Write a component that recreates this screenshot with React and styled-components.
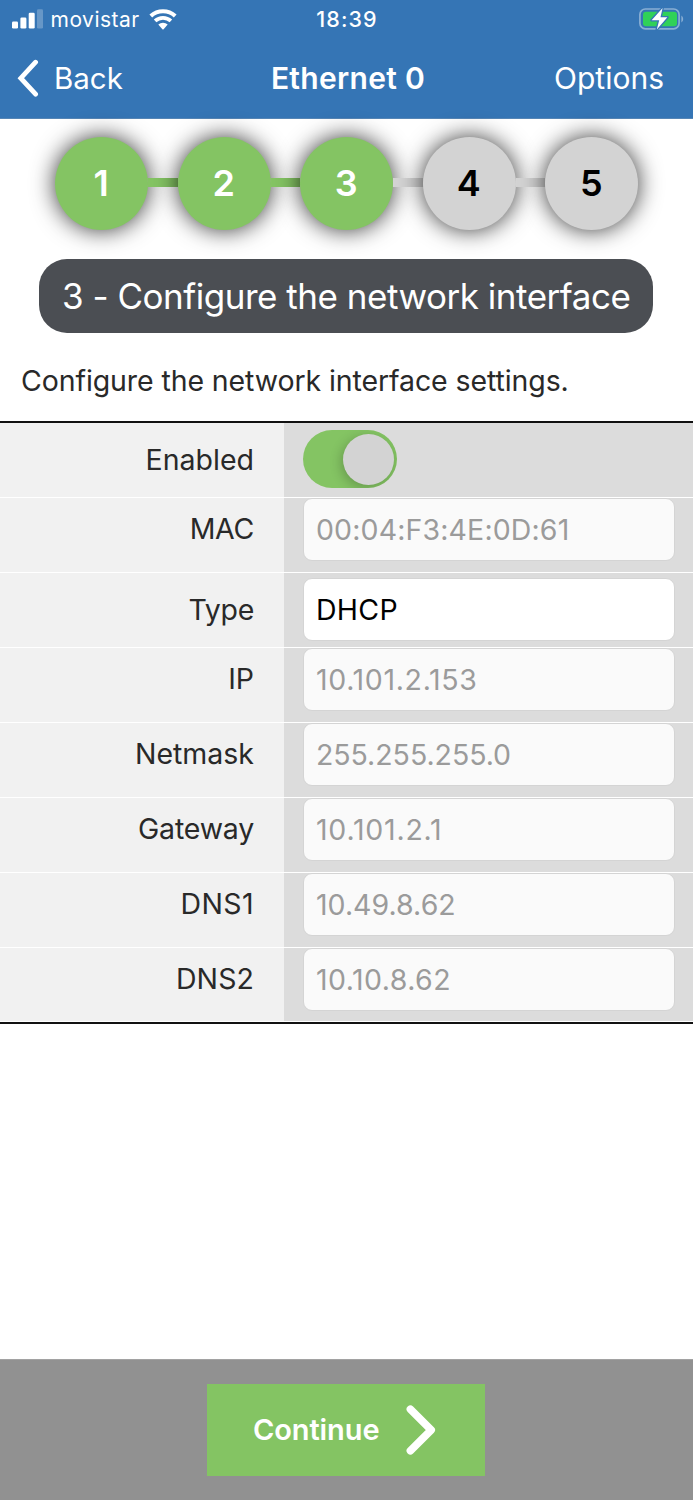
import React from 'react';
import styled, { createGlobalStyle } from 'styled-components';

const GlobalStyle = createGlobalStyle`
  * {
    box-sizing: border-box;
  }
  body {
    margin: 0;
    background: #fff;
    font-family: Inter, "Liberation Sans", sans-serif;
  }
`;

const Page = styled.div`
  display: flex;
  flex-direction: column;
  width: 693px;
  height: 1500px;
  overflow: hidden;
`;

const Header = styled.header`
  height: 119px;
  background: #3575b5;
  border-bottom: 1px solid #5686b6;
  color: #fff;
`;

const StatusBar = styled.div`
  display: grid;
  grid-template-columns: 1fr auto 1fr;
  align-items: center;
  height: 38px;
  padding: 0 9px 0 12px;
`;

const Carrier = styled.div`
  display: flex;
  align-items: center;
  font-size: 21px;
  letter-spacing: 0.5px;

  span {
    margin: 0 9px 0 7.5px;
  }
`;

const Time = styled.div`
  padding-right: 2px;
  font-size: 21.5px;
  font-weight: 500;
  letter-spacing: 1.1px;
`;

const Battery = styled.svg`
  justify-self: end;
`;

const NavBar = styled.nav`
  display: grid;
  grid-template-columns: 1fr auto 1fr;
  align-items: center;
  height: 80px;
  padding: 0 29px 0 17px;
  font-size: 30px;
`;

const BackLink = styled.div`
  display: flex;
  align-items: center;
  gap: 14px;
  font-size: 29.5px;
`;

const Title = styled.h1`
  margin: 0;
  padding-left: 15px;
  font-size: 30px;
  font-weight: 600;
  letter-spacing: 0.3px;
`;

const OptionsLink = styled.div`
  text-align: right;
`;

const Steps = styled.div`
  display: flex;
  align-items: center;
  margin: 18px 0 0 55px;
`;

const Circle = styled.div`
  flex: none;
  width: 93px;
  height: 93px;
  padding-right: 1px;
  border-radius: 50%;
  background: ${({ $done }) => ($done ? '#84c463' : '#d3d3d3')};
  color: ${({ $done }) => ($done ? '#fff' : '#000')};
  box-shadow: 0 0 23px rgba(0, 0, 0, 0.8);
  font-size: 36px;
  font-weight: 600;
  line-height: 93px;
  text-align: center;
`;

const Connector = styled.div`
  flex: none;
  width: 29.6px;
  height: 9px;
  margin-bottom: 2px;
  background: ${({ $done }) => ($done ? '#84c463' : '#d3d3d3')};
`;

const StepTitle = styled.h2`
  width: 614px;
  height: 74px;
  margin: 29px 0 0 39px;
  padding-left: 23px;
  border-radius: 28px;
  background: #4b4e53;
  color: #fff;
  font-size: 35px;
  font-weight: 400;
  letter-spacing: -0.48px;
  line-height: 74px;
  white-space: nowrap;
`;

const Description = styled.p`
  height: 88px;
  margin: 0;
  padding-left: 21px;
  color: #292929;
  font-size: 28.5px;
  letter-spacing: -0.1px;
  line-height: 95px;
  white-space: nowrap;
`;

const Form = styled.div`
  border-top: 2px solid #111;
  border-bottom: 2px solid #111;
`;

const Row = styled.div`
  display: grid;
  grid-template-columns: 284px 1fr;
  height: 75px;
  border-bottom: 1px solid #fff;

  &:last-child {
    height: 74px;
  }
`;

const Label = styled.div`
  padding-right: 30px;
  background: #f1f1f1;
  color: #292929;
  font-size: 28.5px;
  letter-spacing: ${({ $tracking }) => $tracking || 0}px;
  line-height: ${({ $centered }) => ($centered ? 73 : 61)}px;
  text-align: right;
`;

const Cell = styled.div`
  padding: ${({ $top }) => $top || 0}px 18px 0 19px;
  background: #dcdcdc;
`;

const Field = styled.input`
  display: block;
  width: 100%;
  height: 63px;
  padding: 0 12px;
  border: 1px solid #d4d4d4;
  border-radius: 9px;
  background: ${({ $editable }) => ($editable ? '#fff' : '#fafafa')};
  color: ${({ $editable }) => ($editable ? '#000' : '#9b9b9b')};
  font-family: inherit;
  font-size: 28.5px;
  letter-spacing: ${({ $tracking }) => $tracking || 0}px;
  outline: none;
`;

const Switch = styled.div`
  display: flex;
  align-items: center;
  justify-content: flex-end;
  width: 94px;
  height: 58px;
  padding-right: 3px;
  border-radius: 29px;
  background: #84c463;
  overflow: hidden;
`;

const Knob = styled.div`
  width: 51px;
  height: 51px;
  border-radius: 50%;
  background: #d3d3d3;
  box-shadow: -2px 3px 12px rgba(0, 0, 0, 0.22);
`;

const Footer = styled.footer`
  display: flex;
  justify-content: center;
  height: 141px;
  margin-top: auto;
  padding: 24px 1px 0 0;
  border-top: 1px solid #a2a2a2;
  background: #919191;
`;

const ContinueButton = styled.button`
  display: flex;
  align-items: center;
  gap: 26.5px;
  width: 278px;
  height: 92px;
  padding: 0 0 0 46px;
  border: 0;
  background: #84c463;
  color: #fff;
  font-family: inherit;
  font-size: 29px;
  font-weight: 600;
  letter-spacing: -0.1px;

  span {
    padding-bottom: 2px;
  }
`;

const STEPS = [1, 2, 3, 4, 5];
const CURRENT_STEP = 3;

const FIELDS = [
  { label: 'MAC', value: '00:04:F3:4E:0D:61', labelTracking: -0.3, tracking: 0.13 },
  { label: 'Type', value: 'DHCP', labelTracking: -0.3, tracking: 0.3, editable: true },
  { label: 'IP', value: '10.101.2.153', tracking: 0.66 },
  { label: 'Netmask', value: '255.255.255.0', tracking: -0.05 },
  { label: 'Gateway', value: '10.101.2.1', labelTracking: -0.2, tracking: 0.78 },
  { label: 'DNS1', value: '10.49.8.62', labelTracking: 0.4, tracking: 0.02 },
  { label: 'DNS2', value: '10.10.8.62', labelTracking: 0.1, tracking: 0.45 },
];

const SignalIcon = () => (
  <svg width="31" height="20" viewBox="0 0 31 20" fill="#fff">
    <rect x="0" y="12.5" width="6" height="7" rx="1.3" />
    <rect x="8.4" y="8.5" width="6" height="11" rx="1.3" />
    <rect x="16.7" y="3.7" width="6" height="15.8" rx="1.3" />
    <rect x="25" y="0.3" width="6" height="19.2" rx="1.3" opacity="0.25" />
  </svg>
);

const WifiIcon = () => (
  <svg width="28" height="21" viewBox="0 0 28 21" fill="none" stroke="#fff">
    <path d="M1.8 7A18.2 18.2 0 0 1 26.2 7" strokeWidth="4.1" />
    <path d="M6.1 11.9A11.8 11.8 0 0 1 21.9 11.9" strokeWidth="3.8" />
    <path d="M9.3 15.6A7 7 0 0 1 18.7 15.6L14.6 20.2Q14 20.7 13.4 20.2Z" fill="#fff" stroke="none" />
  </svg>
);

const BatteryIcon = () => (
  <Battery width="45" height="24" viewBox="0 0 45 24">
    <rect x="0.9" y="2" width="39.2" height="19.8" rx="5.5" fill="none" stroke="#fff" strokeWidth="1.7" opacity="0.42" />
    <path d="M42.4 8.4Q44.2 9.4 44.2 11.9T42.4 15.4Z" fill="#fff" opacity="0.42" />
    <rect x="4" y="4.8" width="34" height="14.4" rx="3" fill="#30d158" />
    <path
      d="M23.6 1L12.6 13.2H20.2L17.8 22.4L28.4 10.3H21.5Z"
      fill="#fff"
      stroke="#3575b5"
      strokeWidth="2.6"
      strokeLinejoin="round"
      paintOrder="stroke"
    />
  </Battery>
);

const App = () => {
  return (
    <>
      <GlobalStyle />
      <Page>
        <Header>
          <StatusBar>
            <Carrier>
              <SignalIcon />
              <span>movistar</span>
              <WifiIcon />
            </Carrier>
            <Time>18:39</Time>
            <BatteryIcon />
          </StatusBar>
          <NavBar>
            <BackLink>
              <svg width="23" height="38" viewBox="0 0 23 38" fill="none" stroke="#fff" strokeWidth="4.8" strokeLinecap="round">
                <path d="M18.6 3.2L3.8 19.2L18.6 35.2" />
              </svg>
              Back
            </BackLink>
            <Title>Ethernet 0</Title>
            <OptionsLink>Options</OptionsLink>
          </NavBar>
        </Header>

        <Steps>
          {STEPS.map((step) => (
            <React.Fragment key={step}>
              {step > 1 && <Connector $done={step <= CURRENT_STEP} />}
              <Circle $done={step <= CURRENT_STEP}>{step}</Circle>
            </React.Fragment>
          ))}
        </Steps>

        <StepTitle>3 - Configure the network interface</StepTitle>
        <Description>Configure the network interface settings.</Description>

        <Form>
          <Row>
            <Label $centered>Enabled</Label>
            <Cell $top={7}>
              <Switch>
                <Knob />
              </Switch>
            </Cell>
          </Row>
          {FIELDS.map((field) => (
            <Row key={field.label}>
              <Label $centered={field.editable} $tracking={field.labelTracking}>{field.label}</Label>
              <Cell $top={field.editable ? 5 : 0}>
                <Field
                  $editable={field.editable}
                  $tracking={field.tracking}
                  value={field.value}
                  aria-label={field.label}
                  readOnly
                />
              </Cell>
            </Row>
          ))}
        </Form>

        <Footer>
          <ContinueButton>
            <span>Continue</span>
            <svg width="30" height="50" viewBox="0 0 30 50" fill="none" stroke="#fff" strokeWidth="7.6" strokeLinecap="round" strokeLinejoin="round">
              <path d="M4.4 4.3L25.2 25L4.4 45.7" />
            </svg>
          </ContinueButton>
        </Footer>
      </Page>
    </>
  );
};

export default App;
